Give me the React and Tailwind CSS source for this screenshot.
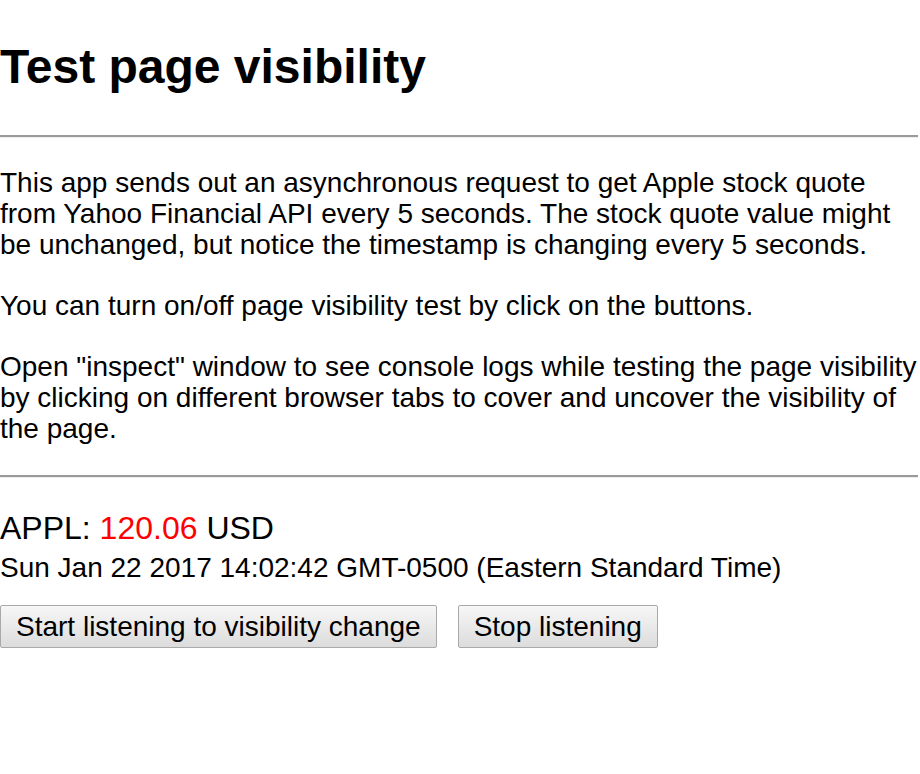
export default function App() {
  return (
    <div className="min-h-screen bg-white text-black font-['Liberation_Sans',Arial,sans-serif]">
      <h1 className="pt-[39px] text-[48px] font-bold leading-[55px]">Test page visibility</h1>

      <hr className="mt-[41px] mr-[2px] border-0 border-t-2 border-b border-t-[#9a9a9a] border-b-[#eeeeee]" />

      <div className="mt-[29px] text-[28px] leading-[31px]">
        <p>
          This app sends out an asynchronous request to get Apple stock quote from Yahoo Financial API every 5
          seconds. The stock quote value might be unchanged, but notice the timestamp is changing every 5 seconds.
        </p>
        <p className="mt-[30px]">You can turn on/off page visibility test by click on the buttons.</p>
        <p className="mt-[30px]">
          Open "inspect" window to see console logs while testing the page visibility by clicking on different browser
          tabs to cover and uncover the visibility of the page.
        </p>
      </div>

      <hr className="mt-[31px] mr-[2px] border-0 border-t-2 border-b border-t-[#9a9a9a] border-b-[#eeeeee]" />

      <div className="mt-[32px] text-[32px] leading-[37px]">
        APPL: <span className="text-[#ff0000]">120.06</span> USD
      </div>
      <div className="mt-[5px] text-[28px] leading-[31px]">Sun Jan 22 2017 14:02:42 GMT-0500 (Eastern Standard Time)</div>

      <div className="mt-[22px] flex gap-[21px]">
        <button className="h-[43px] px-[15px] text-[28px] leading-[31px] border border-[#a9a9a9] rounded-[2px] bg-gradient-to-b from-[#f7f7f7] to-[#dcdcdc]">
          Start listening to visibility change
        </button>
        <button className="h-[43px] px-[15px] text-[28px] leading-[31px] border border-[#a9a9a9] rounded-[2px] bg-gradient-to-b from-[#f7f7f7] to-[#dcdcdc]">
          Stop listening
        </button>
      </div>
    </div>
  )
}
